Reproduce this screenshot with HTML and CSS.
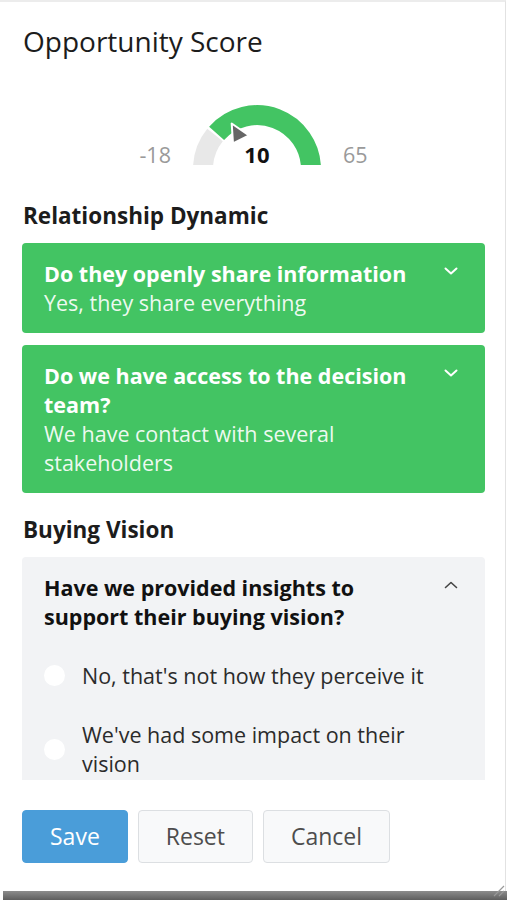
FILE: index.html
```html
<!DOCTYPE html>
<html lang="en">

<head>
  <meta charset="UTF-8" />
  <meta name="viewport" content="width=device-width, initial-scale=1.0" />
  <link rel="stylesheet" href="styles.css">
  <title>Opportunity Score</title>
</head>

<body>
  <div class="dialog">
    <div class="content">
      <h1 class="title">Opportunity Score</h1>

      <!-- gauge -->
      <div class="gauge-row">
        <span class="gauge-label">-18</span>
        <div class="gauge">
          <svg width="128" height="60" viewBox="0 0 128 60">
            <path d="M10 64 A54 54 0 0 1 22.04 30.02" fill="none" stroke="#e8e8e8" stroke-width="20" />
            <path d="M23.6 28.3 A54 54 0 0 1 118 64" fill="none" stroke="#43c463" stroke-width="20" />
            <polygon points="38.7,18.5 40,38.5 56,30.5" fill="#666" stroke="#fff" stroke-width="2" stroke-linejoin="round" />
          </svg>
          <span class="gauge-value">10</span>
        </div>
        <span class="gauge-label">65</span>
      </div>

      <h2 class="section-title">Relationship Dynamic</h2>

      <div class="question answered">
        <div class="question-text">
          <div class="question-title">Do they openly share information</div>
          <div class="question-answer">Yes, they share everything</div>
        </div>
        <svg class="chevron" width="14" height="8" viewBox="0 0 14 8">
          <path d="M1.5 1.5 L7 6.5 L12.5 1.5" fill="none" stroke="#fff" stroke-width="2" stroke-linecap="round" stroke-linejoin="round" />
        </svg>
      </div>

      <div class="question answered">
        <div class="question-text">
          <div class="question-title">Do we have access to the decision team?</div>
          <div class="question-answer">We have contact with several stakeholders</div>
        </div>
        <svg class="chevron" width="14" height="8" viewBox="0 0 14 8">
          <path d="M1.5 1.5 L7 6.5 L12.5 1.5" fill="none" stroke="#fff" stroke-width="2" stroke-linecap="round" stroke-linejoin="round" />
        </svg>
      </div>

      <h2 class="section-title">Buying Vision</h2>

      <div class="question open">
        <div class="question-head">
          <div class="question-title">Have we provided insights to support their buying vision?</div>
          <svg class="chevron" width="14" height="8" viewBox="0 0 14 8">
            <path d="M1.5 6.5 L7 1.5 L12.5 6.5" fill="none" stroke="#444" stroke-width="1.6" stroke-linecap="round" stroke-linejoin="round" />
          </svg>
        </div>
        <label class="option">
          <span class="radio"></span>
          <span class="option-text">No, that's not how they perceive it</span>
        </label>
        <label class="option">
          <span class="radio"></span>
          <span class="option-text">We've had some impact on their vision</span>
        </label>
      </div>
    </div>

    <div class="footer">
      <button class="btn btn-primary">Save</button>
      <button class="btn">Reset</button>
      <button class="btn">Cancel</button>
    </div>

    <!-- 右下角拖拽 -->
    <svg class="resize" width="14" height="14" viewBox="0 0 14 14">
      <path d="M13 3 L3 13 M13 8 L8 13" stroke="#999" stroke-width="1.2" />
    </svg>
  </div>
  <div class="shadow-bar"></div>
</body>

</html>
```

FILE: styles.css
```css
:root {
  --green: #43c463;
  --blue: #4a9dd9;
  --text: #1c1c1c;
}

* {
  box-sizing: border-box;
}

body {
  margin: 0;
  background-color: #fff;
  font-family: "Open Sans", "Liberation Sans", sans-serif;
  color: var(--text);
}

.dialog {
  position: relative;
  width: 506px;
  height: 891px;
  background-color: #fff;
  border-top: 2px solid #ececec;
  border-right: 1px solid #e2e2e2;
  display: flex;
  flex-direction: column;
}

.content {
  height: 778px;
  padding: 20px 20px 0 22px;
  overflow-y: auto;
  scrollbar-width: none;
}

.title {
  font-size: 28px;
  font-weight: 400;
  margin: 0 0 0 1px;
}

/* gauge */
.gauge-row {
  display: flex;
  justify-content: center;
  align-items: flex-end;
  gap: 22px;
  margin: 45px 0 35px;
}

.gauge-label {
  font-size: 21.5px;
  line-height: 1;
  color: #9a9a9a;
}

.gauge {
  display: grid;
}

.gauge svg,
.gauge-value {
  grid-area: 1 / 1;
}

.gauge svg {
  display: block;
}

.gauge-value {
  align-self: end;
  justify-self: center;
  font-size: 22px;
  font-weight: 700;
  line-height: 1;
  color: #111;
}

.section-title {
  font-size: 22.5px;
  font-weight: 700;
  margin: 21px 0 12px 1px;
}

/* question cards */
.question {
  border-radius: 4px;
  margin-bottom: 12px;
  font-size: 21.5px;
  line-height: 29px;
}

.question.answered {
  background-color: var(--green);
  color: #fff;
  display: flex;
  padding: 16px 27px 16px 22px;
}

.question-text {
  flex: 1;
  padding-right: 14px;
}

.question-title {
  font-weight: 700;
}

.question-answer {
  color: rgba(255, 255, 255, 0.92);
}

.chevron {
  flex-shrink: 0;
  margin-top: 8px;
}

.question.open {
  background-color: #f2f3f5;
  padding: 16px 27px 0 22px;
}

.question-head {
  display: flex;
  margin-bottom: 15px;
}

.question-head .question-title {
  flex: 1;
  padding-right: 30px;
  color: #111;
}

.option {
  display: flex;
  align-items: center;
  gap: 17px;
  padding: 15px 0;
  color: #2b2b2b;
}

.radio {
  flex-shrink: 0;
  width: 21px;
  height: 21px;
  border-radius: 50%;
  background-color: #fff;
}

/* footer buttons */
.footer {
  display: flex;
  gap: 10px;
  padding: 30px 22px 0;
}

.btn {
  display: inline-flex;
  align-items: center;
  height: 53px;
  padding: 0 27px;
  font-family: inherit;
  font-size: 23px;
  line-height: 1.2;
  white-space: nowrap;
  color: #4d4d4d;
  background-color: #f8f9fa;
  border: 1px solid #dcdfe2;
  border-radius: 4px;
}

.btn-primary {
  background-color: var(--blue);
  border-color: var(--blue);
  color: #fff;
}

.resize {
  position: absolute;
  right: 0;
  bottom: -6px;
}

.shadow-bar {
  height: 9px;
  margin-left: 3px;
  background: linear-gradient(#8c8c8c, #5e5e5e);
}
```
